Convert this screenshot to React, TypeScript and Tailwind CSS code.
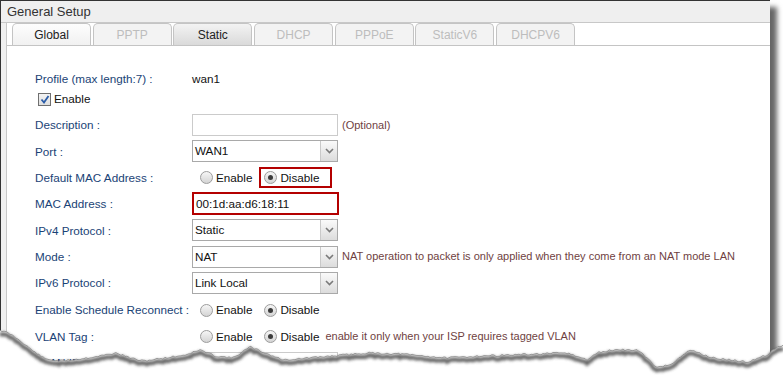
import React from 'react';

const LABEL = 'text-[#1a4376]';
const NOTE = 'text-[11px] text-[#6f3f3f]';

const TABS = [
  { name: 'Global', kind: 'active' },
  { name: 'PPTP', kind: 'off' },
  { name: 'Static', kind: 'on' },
  { name: 'DHCP', kind: 'off' },
  { name: 'PPPoE', kind: 'off' },
  { name: 'StaticV6', kind: 'off' },
  { name: 'DHCPV6', kind: 'off' },
];

// rough outline of the torn bottom edge
const TEAR: [number, number][] = [
  [0, 330], [10, 334], [22, 342], [33, 351], [45, 359], [60, 361], [80, 359], [100, 356],
  [117, 353], [130, 358], [143, 361], [165, 358], [185, 355], [200, 350], [215, 356],
  [233, 358], [250, 347], [265, 353], [283, 360], [310, 358], [333, 356], [367, 353],
  [400, 354], [447, 358], [480, 356], [513, 355], [567, 353], [587, 360], [597, 353],
  [613, 350], [637, 350], [647, 358], [657, 368], [673, 363], [690, 350], [713, 358],
  [747, 362], [767, 355], [772, 350], [783, 345],
];

function tearLine() {
  let seed = 11;
  const rnd = () => {
    seed = (seed * 9301 + 49297) % 233280;
    return seed / 233280;
  };
  const pts: string[] = [];
  for (let i = 0; i < TEAR.length - 1; i++) {
    const [x0, y0] = TEAR[i];
    const [x1, y1] = TEAR[i + 1];
    for (let x = x0; x < x1; x += 2) {
      const t = (x - x0) / (x1 - x0);
      pts.push(`${x},${(y0 + (y1 - y0) * t + (rnd() - 0.5) * 2).toFixed(1)}`);
    }
  }
  const last = TEAR[TEAR.length - 1];
  pts.push(`${last[0]},${last[1]}`);
  return pts.join(' ');
}

function Chevron() {
  return (
    <svg width="9" height="6" viewBox="0 0 9 6">
      <path d="M1 1l3.5 3.5L8 1" fill="none" stroke="#7a7a7a" strokeWidth="1.6" />
    </svg>
  );
}

function Select({ value }: { value: string }) {
  return (
    <div className="flex h-[22px] w-[146px] shrink-0 border border-[#a9a9a9] bg-white">
      <div className="flex-1 pl-[2px] leading-[20px] text-[#111]">{value}</div>
      <div className="flex w-[17px] items-center justify-center border-l border-[#c9c9c9] bg-gradient-to-b from-[#fafafa] to-[#dcdcdc]">
        <Chevron />
      </div>
    </div>
  );
}

function Radio({ checked }: { checked?: boolean }) {
  return (
    <span className="flex h-[13px] w-[13px] shrink-0 items-center justify-center rounded-full border border-[#9c9c9c] bg-gradient-to-b from-[#f6f6f6] to-[#d4d4d4]">
      {checked && <span className="h-[5px] w-[5px] rounded-full bg-[#3c3c3c]" />}
    </span>
  );
}

function RadioPair({ boxed, note }: { boxed?: boolean; note?: string }) {
  return (
    <div className="flex items-center whitespace-nowrap pl-[8px] text-[#111]">
      <Radio />
      <span className="ml-[3px]">Enable</span>
      <div
        className={`ml-[7px] flex h-[21px] items-center border-2 pl-[3px] ${
          boxed ? 'border-[#b40000] pr-[11px]' : 'border-transparent'
        }`}
      >
        <Radio checked />
        <span className="ml-[3px]">Disable</span>
      </div>
      {note && <span className={`ml-[4px] ${NOTE}`}>{note}</span>}
    </div>
  );
}

function Row({ label, children, className = '' }: { label: string; children?: React.ReactNode; className?: string }) {
  return (
    <div className={`flex h-[26.33px] items-center whitespace-nowrap ${className}`}>
      <div className={`w-[157px] shrink-0 ${LABEL}`}>{label}</div>
      {children}
    </div>
  );
}

export default function App() {
  const line = tearLine();
  return (
    <div className="relative h-[382px] w-[783px] overflow-hidden bg-white font-['Liberation_Sans',Arial,sans-serif] text-[11.7px]">
      <div className="flex h-[400px] w-[770px] flex-col border-l border-t border-[#333] bg-[#f0f0f0] shadow-[7px_7px_5px_rgba(0,0,0,0.6)]">
        <div className="h-[22px] shrink-0 border-b border-[#c8c8c8] bg-[#efefef] pl-[6px] text-[13px] leading-[21px] text-[#333]">
          General Setup
        </div>
        <div className="flex flex-1 pl-[5px]">
          <div className="flex-1 border-l border-[#c8c8c8] bg-white">
            <div className="flex h-[23px] items-end gap-[1.7px] border-b border-[#c4c4c4] pl-[5px]">
              {TABS.map((t) => (
                <div
                  key={t.name}
                  className={`flex h-[22px] w-[79px] items-center justify-center rounded-t-[5px] border border-b-0 border-[#c4c4c4] text-[12px] ${
                    t.kind === 'active'
                      ? 'bg-gradient-to-b from-[#fdfdfd] to-[#f1f1f1] text-[#222]'
                      : t.kind === 'on'
                        ? 'bg-gradient-to-b from-[#f3f3f3] to-[#dadada] text-[#222]'
                        : 'bg-[#f3f3f3] text-[#bdbdbd]'
                  }`}
                >
                  {t.name}
                </div>
              ))}
            </div>

            <div className="pl-[28px]">
              <div className="mt-[20px] flex h-[26px] items-center">
                <div className={`w-[157px] shrink-0 ${LABEL}`}>Profile (max length:7) :</div>
                <span className="text-[#111]">wan1</span>
              </div>
              <div className="flex h-[14px] items-center pl-[3px]">
                <span className="flex h-[13px] w-[13px] items-center justify-center border border-[#6f6f6f] bg-gradient-to-b from-[#f4f4f4] to-[#dedede]">
                  <svg width="10" height="9" viewBox="0 0 10 9">
                    <path d="M1.5 4.5l2.5 3L8.5 1" fill="none" stroke="#2a5ca8" strokeWidth="1.8" />
                  </svg>
                </span>
                <span className="ml-[3px] text-[#111]">Enable</span>
              </div>

              <Row label="Description :" className="mt-[5.8px]">
                <div className="h-[22px] w-[146px] border border-[#cbcbcb] bg-white" />
                <span className={`ml-[4px] ${NOTE}`}>(Optional)</span>
              </Row>
              <Row label="Port :">
                <Select value="WAN1" />
              </Row>
              <Row label="Default MAC Address :">
                <RadioPair boxed />
              </Row>
              <Row label="MAC Address :">
                <div className="h-[23px] w-[147px] border-2 border-[#b40000] bg-white pl-[2px] leading-[19px] text-[#111]">
                  00:1d:aa:d6:18:11
                </div>
              </Row>
              <Row label="IPv4 Protocol :">
                <Select value="Static" />
              </Row>
              <Row label="Mode :">
                <Select value="NAT" />
                <span className={`ml-[4px] ${NOTE}`}>
                  NAT operation to packet is only applied when they come from an NAT mode LAN
                </span>
              </Row>
              <Row label="IPv6 Protocol :">
                <Select value="Link Local" />
              </Row>
              <Row label="Enable Schedule Reconnect :" className="mt-[1px]">
                <RadioPair />
              </Row>
              <Row label="VLAN Tag :">
                <RadioPair note="enable it only when your ISP requires tagged VLAN" />
              </Row>
              <Row label="VLAN ID :">
                <div className="h-[22px] w-[146px] border border-[#cbcbcb] bg-white" />
              </Row>
            </div>
          </div>
        </div>
      </div>

      <svg className="absolute left-0 top-[320px]" width="783" height="62" viewBox="0 320 783 62">
        <defs>
          <filter id="tearBlur" x="-5%" y="-50%" width="110%" height="200%">
            <feGaussianBlur stdDeviation="1.6" />
          </filter>
        </defs>
        <polygon points={`0,382 ${line} 783,382`} fill="#ffffff" />
        <polyline
          points={line}
          transform="translate(0 3)"
          fill="none"
          stroke="#4a4a4a"
          strokeWidth="4"
          opacity="0.85"
          filter="url(#tearBlur)"
        />
        <polyline points={line} fill="none" stroke="#8a8a8a" strokeWidth="0.8" />
      </svg>
    </div>
  );
}
